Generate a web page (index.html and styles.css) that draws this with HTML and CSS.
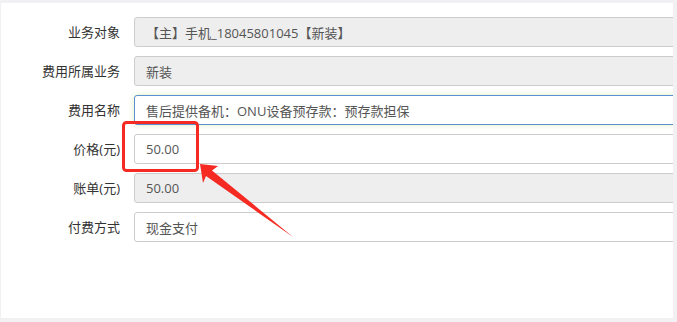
FILE: index.html
```html
<!DOCTYPE html>
<html lang="zh-CN">
<head>
  <meta charset="UTF-8" />
  <title>费用录入</title>
  <link rel="stylesheet" href="styles.css">
</head>
<body>
  <div class="panel">
    <form class="fee-form">
      <label class="lbl">业务对象</label>
      <input class="field" type="text" value="【主】手机_18045801045【新装】" disabled>

      <label class="lbl">费用所属业务</label>
      <input class="field" type="text" value="新装" disabled>

      <label class="lbl">费用名称</label>
      <input class="field focus" type="text" value="售后提供备机：ONU设备预存款：预存款担保">

      <label class="lbl">价格(元)</label>
      <input class="field" type="text" value="50.00">

      <label class="lbl">账单(元)</label>
      <input class="field" type="text" value="50.00" disabled>

      <label class="lbl">付费方式</label>
      <input class="field" type="text" value="现金支付">
    </form>

    <!-- annotation: red frame + arrow -->
    <svg class="mark" width="677" height="322" viewBox="0 0 677 322">
      <rect x="123.5" y="122.5" width="74" height="48" rx="3" fill="none" stroke="#f52a22" stroke-width="3"/>
      <polygon points="200,164 218,166 212,170.5 293,237 206,176 203,183" fill="#f52a22"/>
    </svg>
  </div>
</body>
</html>
```

FILE: styles.css
```css
body {
  margin: 0;
  padding: 3px 4px 4px 1px;
  background-color: #f1f1f3;
  font-family: "Open Sans", "Noto Sans CJK SC", sans-serif;
}
.panel {
  position: relative;
  height: 315px;
  background: white;
  overflow: hidden;
}
.fee-form {
  display: grid;
  grid-template-columns: 119px 560px;
  column-gap: 14px;
  row-gap: 9px;
  padding-top: 14px;
}
.lbl {
  height: 30px;
  line-height: 30px;
  text-align: right;
  font-size: 13px;
  color: #333;
}
.field {
  box-sizing: border-box;
  height: 30px;
  margin: 0;
  padding: 0 11px;
  font-family: inherit;
  font-size: 13px;
  color: #555;
  background: white;
  border: 1px solid #cccccc;
  border-radius: 3px;
  outline: none;
}
.field:disabled {
  background-color: #eeeeee;
  color: #555;
}
.focus {
  border-color: #5a8fd0;
  box-shadow: 0 0 6px rgba(214, 232, 170, 0.7);
}
.mark {
  position: absolute;
  left: -1px;
  top: -3px;
  pointer-events: none;
}
```
